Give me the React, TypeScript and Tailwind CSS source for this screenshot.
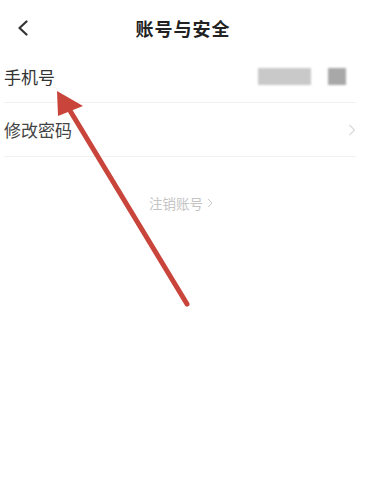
import React from 'react';

const font = { fontFamily: '"Noto Sans CJK SC", "Noto Sans", sans-serif' };

export default function App() {
  return (
    <div className="relative w-[366px] h-[500px] bg-white overflow-hidden" style={font}>
      {/* header */}
      <div className="relative flex h-[52px] items-center justify-center pt-[4px]">
        <svg className="absolute left-[17px] top-[20px]" width="12" height="16" viewBox="0 0 12 16">
          <path d="M9.5 1.5 L2.5 8 L9.5 14.5" fill="none" stroke="#333" strokeWidth="2.2" strokeLinecap="round" strokeLinejoin="round" />
        </svg>
        <span className="text-[18px] font-bold text-[#222] tracking-[1px]">账号与安全</span>
      </div>

      {/* rows */}
      <div className="pl-[4px] pr-[10px]">
        <div className="flex h-[51px] items-center justify-between border-b border-[#f0f0f0]">
          <span className="text-[17px] text-[#333]">手机号</span>
          <div className="flex items-center gap-[17px] pr-[10px] -mt-[2px]">
            <div className="h-[17px] w-[53px] bg-[#c9c9c9] blur-[1px]" />
            <div className="h-[17px] w-[18px] bg-[#a8a8a8] blur-[1px]" />
          </div>
        </div>
        <div className="flex h-[54px] items-center justify-between border-b border-[#f0f0f0]">
          <span className="text-[17px] text-[#444]">修改密码</span>
          <svg width="8" height="12" viewBox="0 0 8 12">
            <path d="M1.5 1 L6.5 6 L1.5 11" fill="none" stroke="#d8d8d8" strokeWidth="1.2" />
          </svg>
        </div>
      </div>

      <div className="mt-[36px] flex items-center justify-center gap-[4px] pr-[4px]">
        <span className="text-[13.5px] text-[#c4c4c4]">注销账号</span>
        <svg width="6" height="10" viewBox="0 0 6 10">
          <path d="M1 1 L5 5 L1 9" fill="none" stroke="#c8c8c8" strokeWidth="1" />
        </svg>
      </div>

      {/* annotation arrow */}
      <svg className="absolute left-0 top-0 pointer-events-none" width="366" height="500" viewBox="0 0 366 500">
        <line x1="187" y1="304" x2="66" y2="104" stroke="#c9453b" strokeWidth="5" strokeLinecap="round" />
        <polygon points="57,91 83,106 58,116" fill="#c9453b" />
      </svg>
    </div>
  );
}
